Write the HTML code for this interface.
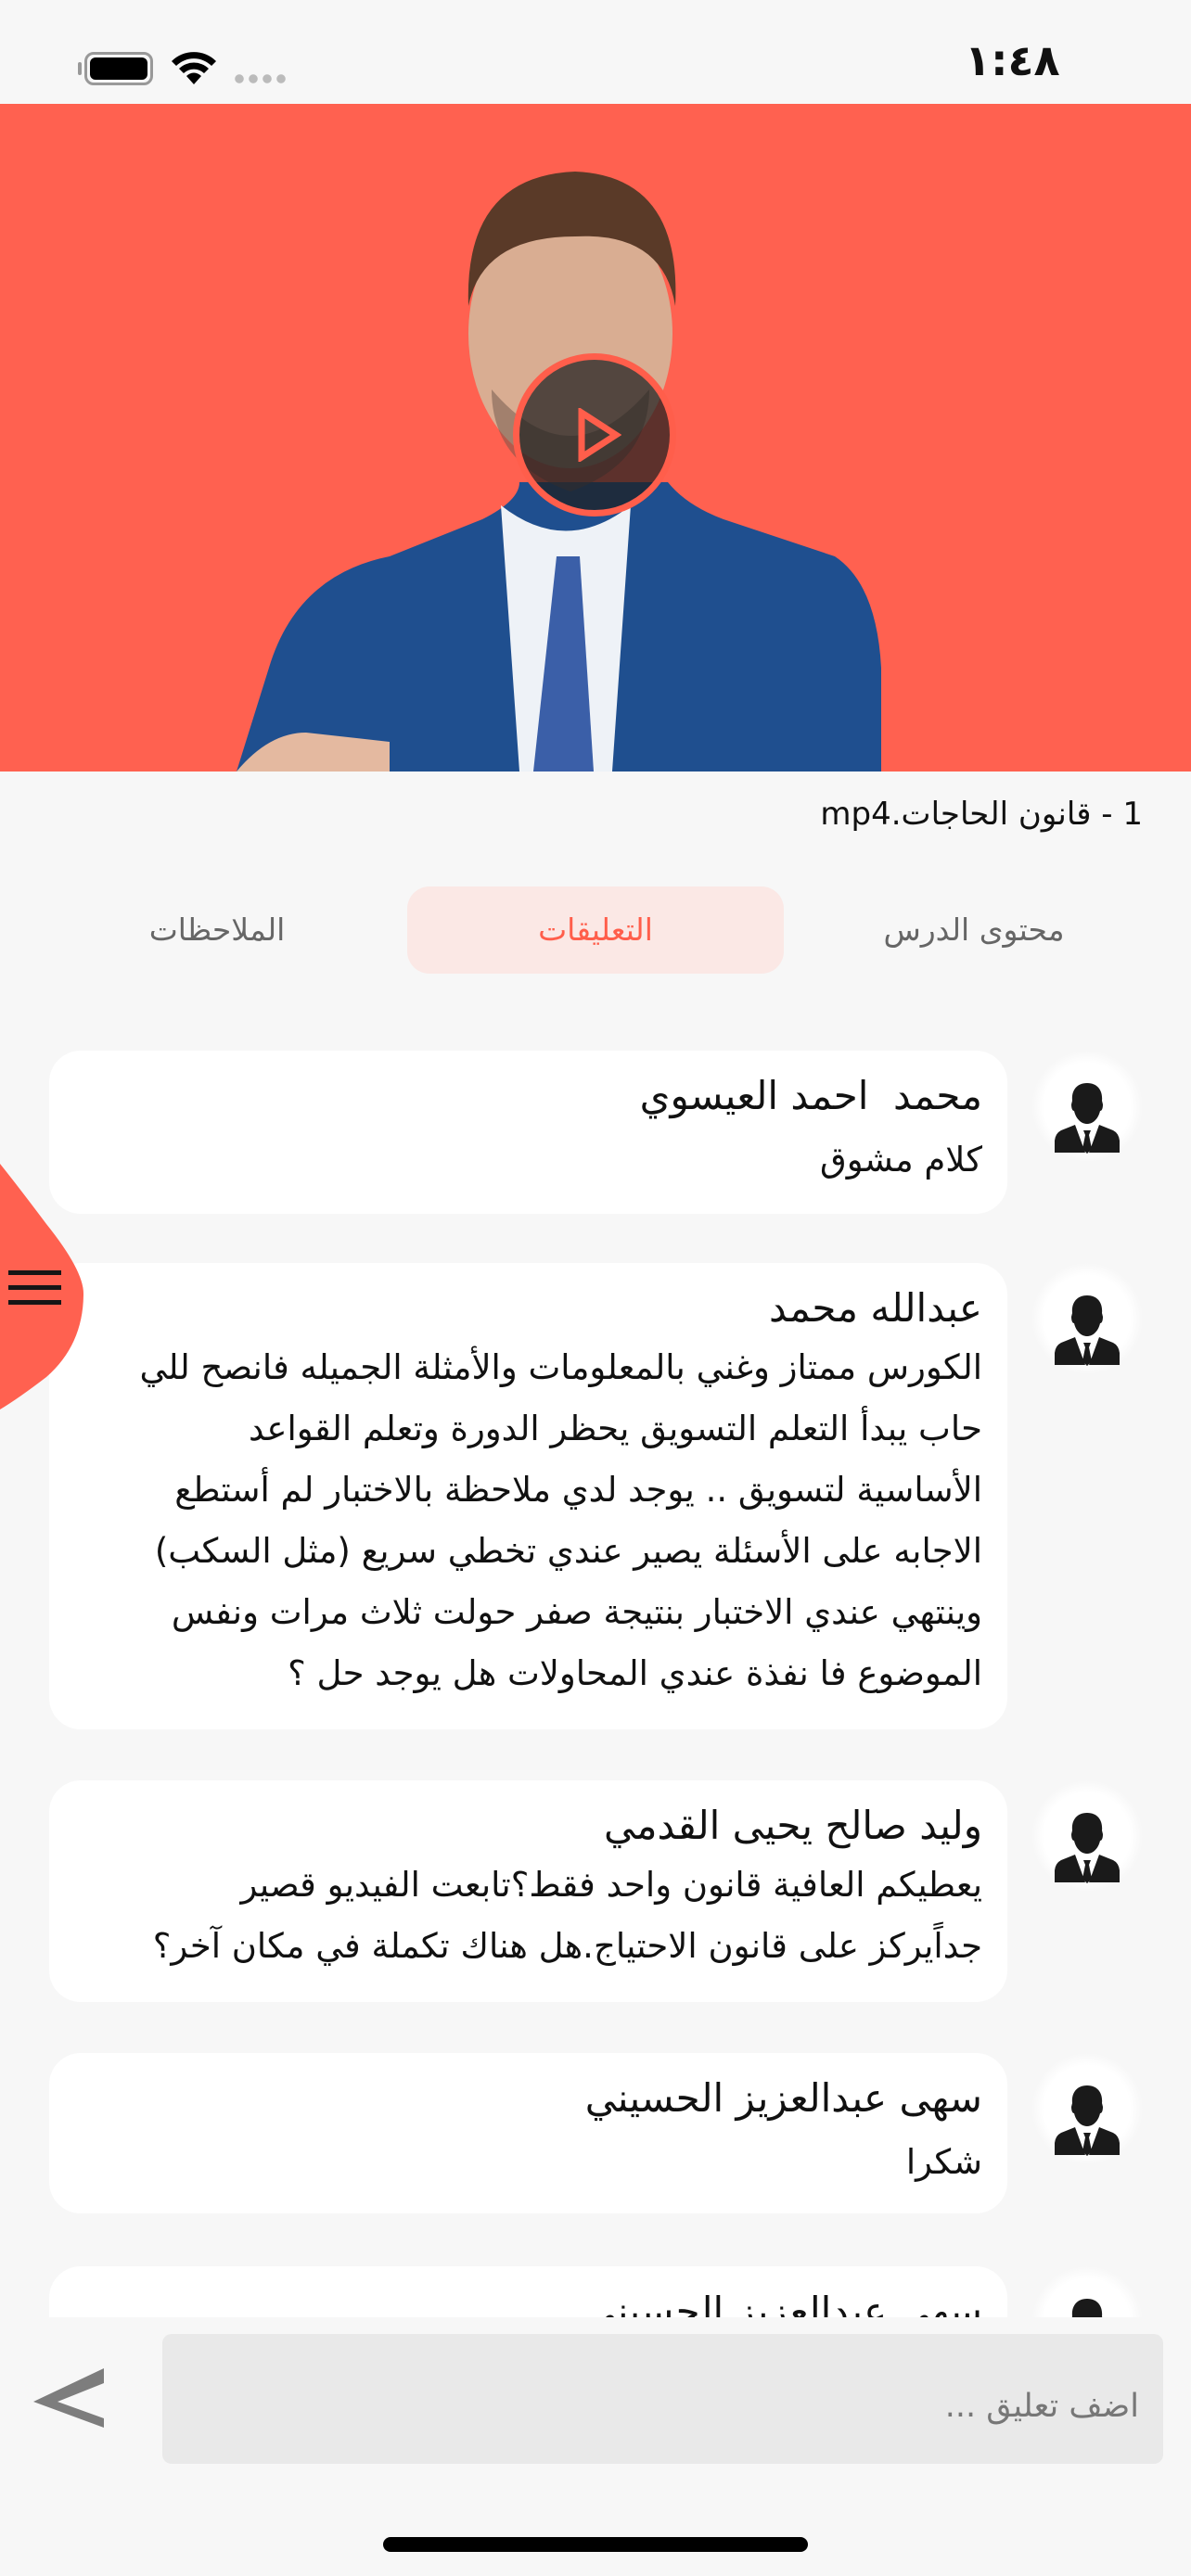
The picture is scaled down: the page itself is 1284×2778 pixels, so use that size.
<!DOCTYPE html>
<html><head><meta charset="utf-8">
<style>
*{margin:0;padding:0;box-sizing:border-box}
body{width:1284px;height:2778px;background:#f7f7f7;position:relative;overflow:hidden;font-family:"DejaVu Sans","Liberation Sans",sans-serif;color:#111}
.abs{position:absolute}
.card{position:absolute;left:53px;width:1033px;background:#fff;border-radius:34px;direction:rtl;padding:18px 27px 0 10px;white-space:nowrap}
.name{font-size:42px;line-height:62px;color:#111}
.body{font-size:37px;line-height:66px;color:#111}
.av{position:absolute;left:1112px;width:120px;height:120px;border-radius:50%;background:radial-gradient(circle,#fff 55%,#e8e8e8 100%)}
</style></head><body>
<div class="abs" style="left:0;top:0;width:1284px;height:112px;background:#f7f7f7"></div>
<div class="abs" style="left:1040px;top:38px;font-size:46px;font-weight:bold;letter-spacing:1px">١:٤٨</div>
<div class="abs" style="left:91px;top:56px;width:74px;height:36px;border:3px solid #999;border-radius:10px;padding:3px"><div style="width:100%;height:100%;background:#000;border-radius:6px"></div></div>
<div class="abs" style="left:84px;top:67px;width:4px;height:14px;background:#999;border-radius:2px"></div>
<svg class="abs" style="left:183px;top:52px" width="52" height="42" viewBox="0 0 52 42"><path d="M2 14a34 34 0 0 1 48 0l-5 5a27 27 0 0 0-38 0z M10 22a23 23 0 0 1 32 0l-5 5a16 16 0 0 0-22 0z M18 30a11 11 0 0 1 16 0l-8 9z" fill="#000"/></svg>
<div class="abs" style="left:253px;top:80px;width:60px;height:11px;background:radial-gradient(circle at 5px 5px,#bbb 4.5px,transparent 5px) 0 0/15px 11px repeat-x"></div>
<div class="abs" style="left:0;top:112px;width:1284px;height:720px;background:#ff6150;overflow:hidden">
<svg width="1284" height="720" viewBox="0 112 1284 720">
<path d="M255 832 L290 720 Q320 620 420 600 L520 560 Q560 540 560 520 L720 520 Q740 545 780 560 L900 600 Q945 630 950 720 L950 832Z" fill="#1f4f8f"/>
<path d="M540 545 L560 832 L660 832 L680 545 Q610 600 540 545Z" fill="#eef2f7"/>
<path d="M600 600 L625 600 L640 832 L575 832Z" fill="#3b5fa8"/>
<path d="M255 832 Q290 790 330 790 L420 800 L420 832Z" fill="#e4b9a0"/>
<ellipse cx="615" cy="360" rx="110" ry="145" fill="#d9ad92"/>
<path d="M505 330 Q500 190 620 185 Q735 190 728 330 Q715 250 620 255 Q520 255 505 330Z" fill="#5a3a28"/>
<path d="M530 420 Q615 520 700 420 Q700 500 615 530 Q530 500 530 420Z" fill="#6b5448" opacity=".5"/>
</svg>
<div class="abs" style="left:553px;top:269px;width:176px;height:176px;border-radius:50%;border:7px solid #ff5e4b;background:rgba(30,30,30,.72)"></div>
<svg class="abs" style="left:622px;top:328px" width="48" height="58" viewBox="0 0 48 58"><path d="M5 5 L42 29 L5 53Z" fill="none" stroke="#ff5e4b" stroke-width="7"/></svg>
</div>
<div class="abs" style="right:52px;top:858px;font-size:34px;direction:rtl">1 - قانون الحاجات.mp4</div>
<div class="abs" style="left:439px;top:956px;width:406px;height:94px;background:#fbe8e5;border-radius:24px"></div>
<div class="abs" style="left:439px;top:956px;width:406px;height:94px;line-height:94px;text-align:center;font-size:33px;color:#ff5e4b">التعليقات</div>
<div class="abs" style="left:900px;top:956px;width:300px;height:94px;line-height:94px;text-align:center;font-size:33px;color:#666">محتوى الدرس</div>
<div class="abs" style="left:84px;top:956px;width:300px;height:94px;line-height:94px;text-align:center;font-size:33px;color:#666">الملاحظات</div>
<div class="abs" style="left:0;top:1100px;width:1284px;height:1399px;overflow:hidden">
<svg width="0" height="0" style="position:absolute"><defs><symbol id="u" viewBox="0 0 120 120"><path d="M60 35c-12 0-17 9-16 19l-1 4c0 4 1 7 3 7 2 9 8 14 14 14s12-5 14-14c2 0 3-3 3-7l-1-4c1-10-4-19-16-19z M47 80 L32 86 Q26 89 25 97 L25 110 L95 110 L95 97 Q94 89 88 86 L73 80 L62 110 L58 110Z" fill="#1a1a1a"/><path d="M56 86 L64 86 L62 91 L65 106 L60 111 L55 106 L58 91Z" fill="#1a1a1a"/></symbol></defs></svg>
<div class="card" style="top:33px;height:176px"><div class="name">محمد&nbsp; احمد العيسوي</div><div class="body" style="line-height:76px">كلام مشوق</div></div>
<div class="av" style="top:33px"><svg width="120" height="120"><use href="#u"/></svg></div>

<div class="card" style="top:262px;height:503px"><div class="name">عبدالله محمد</div><div class="body">الكورس ممتاز وغني بالمعلومات والأمثلة الجميله فانصح للي<br>حاب يبدأ التعلم التسويق يحظر الدورة وتعلم القواعد<br>الأساسية لتسويق .. يوجد لدي ملاحظة بالاختبار لم أستطع<br>الاجابه على الأسئلة يصير عندي تخطي سريع (مثل السكب)<br>وينتهي عندي الاختبار بنتيجة صفر حولت ثلاث مرات ونفس<br>الموضوع فا نفذة عندي المحاولات هل يوجد حل ؟</div></div>
<div class="av" style="top:262px"><svg width="120" height="120"><use href="#u"/></svg></div>

<div class="card" style="top:820px;height:239px"><div class="name">وليد صالح يحيى القدمي</div><div class="body">يعطيكم العافية قانون واحد فقط؟تابعت الفيديو قصير<br>جداًيركز على قانون الاحتياج.هل هناك تكملة في مكان آخر؟</div></div>
<div class="av" style="top:820px"><svg width="120" height="120"><use href="#u"/></svg></div>

<div class="card" style="top:1114px;height:173px"><div class="name">سهى عبدالعزيز الحسيني</div><div class="body" style="line-height:76px">شكرا</div></div>
<div class="av" style="top:1114px"><svg width="120" height="120"><use href="#u"/></svg></div>

<div class="card" style="top:1344px;height:173px"><div class="name">سهى عبدالعزيز الحسيني</div></div>
<div class="av" style="top:1344px"><svg width="120" height="120"><use href="#u"/></svg></div>
</div>
<svg class="abs" style="left:0;top:1250px" width="100" height="275" viewBox="0 0 100 275"><path d="M0 5 Q20 30 50 70 Q90 120 90 145 Q90 200 50 235 Q20 258 0 270Z" fill="#ff6150"/><rect x="9" y="120" width="57" height="5" fill="#161616"/><rect x="9" y="136" width="57" height="5" fill="#161616"/><rect x="9" y="152" width="57" height="5" fill="#161616"/></svg>
<div class="abs" style="left:175px;top:2517px;width:1079px;height:140px;background:#e9e9e9;border-radius:10px"></div>
<div class="abs" style="right:56px;top:2575px;font-size:35px;color:#777;direction:rtl">اضف تعليق ...</div>
<svg class="abs" style="left:32px;top:2552px" width="84" height="68" viewBox="0 0 84 68"><path d="M80 2 L4 38 L80 66 L80 56 L30 38 L80 18Z" fill="#7d7d7d"/></svg>
<div class="abs" style="left:413px;top:2736px;width:458px;height:16px;background:#000;border-radius:8px"></div>
</body></html>
